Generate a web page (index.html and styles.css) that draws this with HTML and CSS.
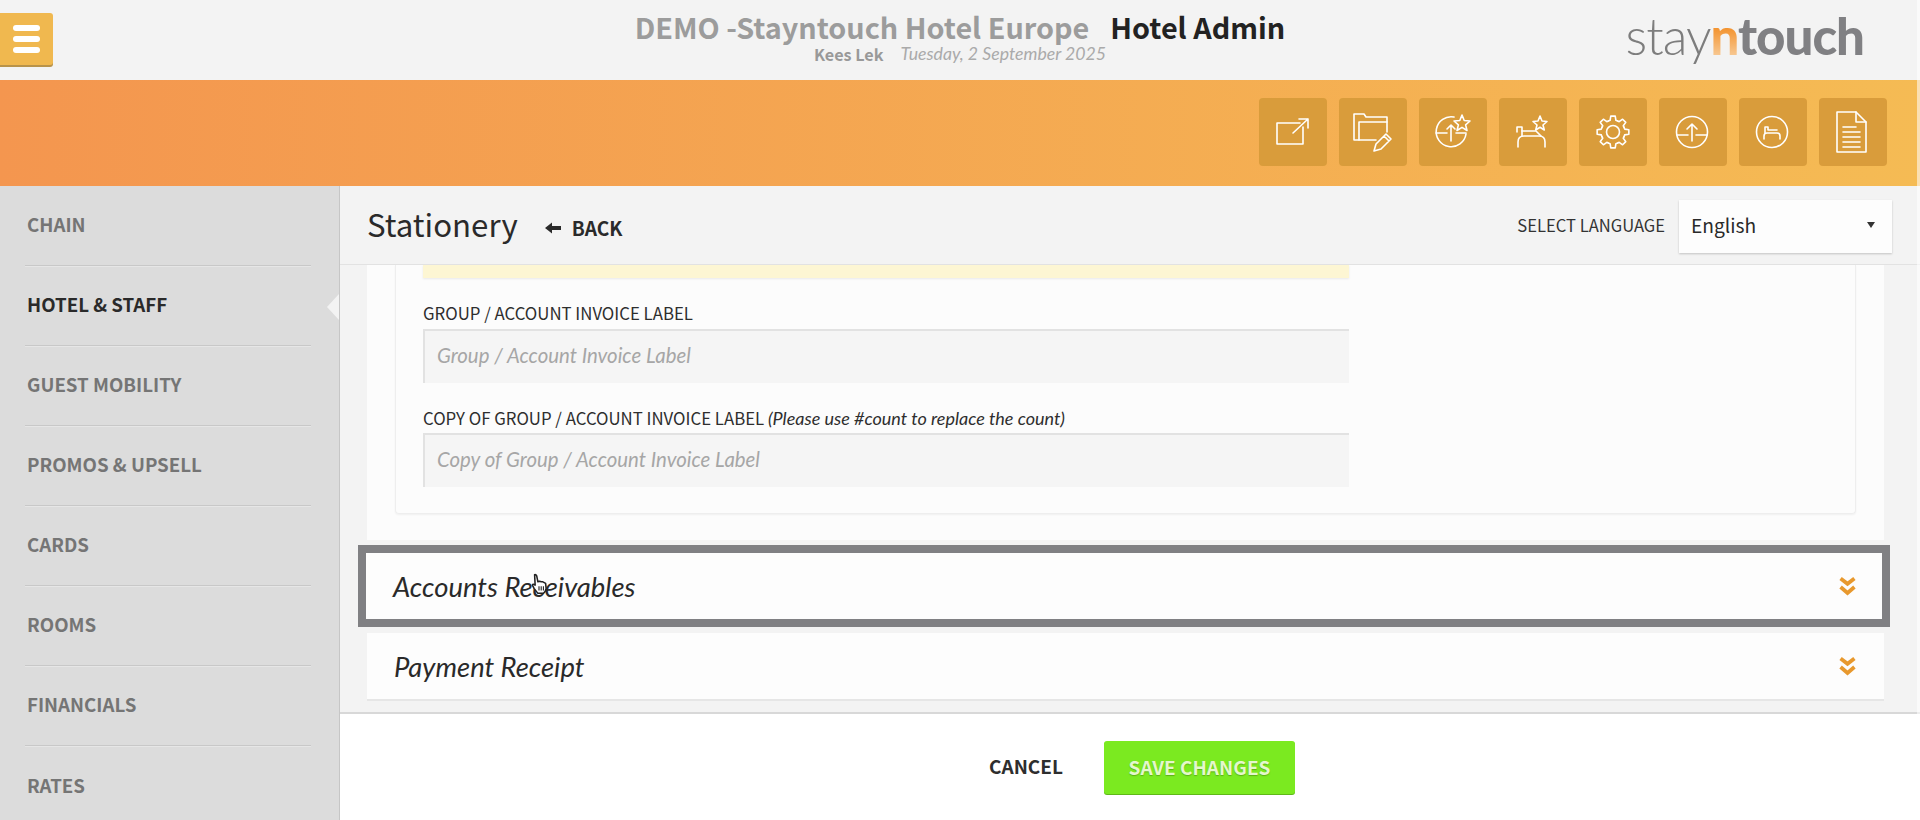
FILE: index.html
```html
<!DOCTYPE html>
<html lang="en">
<head>
<meta charset="utf-8">
<title>Stationery</title>
<link rel="stylesheet" href="styles.css">
</head>
<body>
<div class="app">
  <header class="topbar">
    <div class="topbar-left">
      <button class="menu-btn" aria-label="Menu"><span></span><span></span><span></span></button>
    </div>
    <div class="topbar-title">
      <div class="title-line"><span class="hotel-name">DEMO -Stayntouch Hotel Europe</span><span class="app-name">Hotel Admin</span></div>
      <div class="sub-line"><span class="user">Kees Lek</span><span class="date">Tuesday, 2 September 2025</span></div>
    </div>
    <div class="topbar-right">
      <div class="logo"><span class="logo-stay">stay</span><span class="logo-n">n</span><span class="logo-touch">touch</span></div>
    </div>
  </header>

  <div class="ribbon">
    <a class="tile"><svg viewBox="0 0 68 68"><path d="M41 25H18V46H44V29"/><path d="M34 35L49 21M40 21H49V30"/></svg></a>
    <a class="tile"><svg viewBox="0 0 68 68"><path d="M37 42H15V16H25L27 19H48V34"/><path d="M20 42V24H48"/><path d="M35 53L37 46L47 36L52 41L42 51ZM45 38L50 43"/></svg></a>
    <a class="tile"><svg viewBox="0 0 68 68"><path d="M35 19A15 15 0 1 0 47 36"/><path d="M17 35H28M37 35H47M32 43V27M28 31L32 27L36 31"/><path d="M43 17L45.2 22.5L51 23L46.6 26.8L48 32.5L43 29.4L38 32.5L39.4 26.8L35 23L40.8 22.5Z"/></svg></a>
    <a class="tile"><svg viewBox="0 0 68 68"><path d="M19 49V44Q19 38 25 38H40Q46 38 46 44V49"/><path d="M23 33H37L42 38"/><path d="M18 34V29H23V38"/><path d="M41 18L43 23L48 23.5L44 27L45.3 32L41 29.3L36.700 32L38 27L34 23.5L39 23Z"/></svg></a>
    <a class="tile"><svg viewBox="0 0 68 68"><defs><path id="seg" d="M29.400 22.910L31.100 22.360L31.770 18.160H36.230L36.900 22.360L38.600 22.910"/></defs><use href="#seg"/><use href="#seg" transform="rotate(45 34 34)"/><use href="#seg" transform="rotate(90 34 34)"/><use href="#seg" transform="rotate(135 34 34)"/><use href="#seg" transform="rotate(180 34 34)"/><use href="#seg" transform="rotate(225 34 34)"/><use href="#seg" transform="rotate(270 34 34)"/><use href="#seg" transform="rotate(315 34 34)"/><circle cx="34" cy="34" r="6.500"/></svg></a>
    <a class="tile"><svg viewBox="0 0 68 68"><circle cx="33" cy="34" r="15.500"/><path d="M18 37H29M37 37H48M33 43V26M28 31L33 26L38 31"/></svg></a>
    <a class="tile"><svg viewBox="0 0 68 68"><circle cx="33" cy="34" r="15.500"/><path d="M25 41V38Q25 35 28 35H38Q41 35 41 38V41"/><path d="M26 35V29H29V32H38"/></svg></a>
    <a class="tile"><svg viewBox="0 0 68 68"><path d="M18 14H37L47 24V54H18Z"/><path d="M37 14V24H47M24 29H37M24 34H41M24 39H41M24 44H41M24 49H41"/></svg></a>
  </div>

  <div class="workspace">
    <nav class="sidebar">
      <a class="nav-item">CHAIN</a>
      <a class="nav-item nav-active">HOTEL &amp; STAFF</a>
      <a class="nav-item">GUEST MOBILITY</a>
      <a class="nav-item">PROMOS &amp; UPSELL</a>
      <a class="nav-item">CARDS</a>
      <a class="nav-item">ROOMS</a>
      <a class="nav-item">FINANCIALS</a>
      <a class="nav-item">RATES</a>
    </nav>

    <main class="content">
      <div class="content-head">
        <h1 class="page-title">Stationery</h1>
        <a class="back"><svg class="back-arrow" viewBox="0 0 16 12"><path d="M0 6L7 .5V4H16V8H7V11.500Z"/></svg>BACK</a>
        <div class="lang">
          <span class="lang-label">SELECT LANGUAGE</span>
          <div class="lang-select"><span>English</span><i class="caret"></i></div>
        </div>
      </div>

      <div class="scroller">
        <section class="panel">
          <div class="card">
            <div class="notice"></div>
            <div class="field">
              <label class="field-label">GROUP / ACCOUNT INVOICE LABEL</label>
              <div class="field-input">Group / Account Invoice Label</div>
            </div>
            <div class="field field-second">
              <label class="field-label">COPY OF GROUP / ACCOUNT INVOICE LABEL <em>(Please use #count to replace the count)</em></label>
              <div class="field-input">Copy of Group / Account Invoice Label</div>
            </div>
          </div>
        </section>

        <div class="row row-focus">
          <span class="row-title">Accounts Receivables</span>
          <svg class="chev" viewBox="0 0 16 18"><path d="M1.500 2L8 7L14.500 2M1.500 10L8 15.500L14.500 10"/></svg>
          <svg class="hand" viewBox="0 0 16 20"><path d="M4 1.500Q5.500 1 6 3L7 8L8.500 7.500L10 8L11.500 8L14 9.500L14.500 14Q14 17 12 18.500H7L3.500 14L2 11Q2.500 9.500 4.500 11Z"/><path class="hand-lines" d="M8 12V16M10 12V16M12 12V16"/></svg>
        </div>
        <div class="row row-plain">
          <span class="row-title">Payment Receipt</span>
          <svg class="chev" viewBox="0 0 16 18"><path d="M1.500 2L8 7L14.500 2M1.500 10L8 15.500L14.500 10"/></svg>
        </div>
      </div>

      <footer class="actions">
        <a class="cancel">CANCEL</a>
        <button class="save">SAVE CHANGES</button>
      </footer>
    </main>
  </div>
</div>
</body>
</html>
```
FILE: styles.css
```css
* { box-sizing: border-box; }
html, body { margin: 0; padding: 0; }
body {
  font-family: "Noto Sans CJK SC", "Noto Sans", sans-serif;
  background: #f3f3f3;
  color: #2a2a2a;
}
.app { position: relative; width: 1920px; height: 820px; display: flex; flex-direction: column; overflow: hidden; }
.app::after { content: ""; position: absolute; top: 0; right: 0; bottom: 0; width: 3px; background: rgba(255,255,255,.55); }

/* top bar */
.topbar {
  height: 80px;
  flex: none;
  background: #f3f3f3;
  display: grid;
  grid-template-columns: 1fr auto 1fr;
}
.topbar-left { display: flex; align-items: flex-start; }
.menu-btn {
  width: 53px;
  height: 52px;
  margin-top: 13px;
  padding: 0 13px;
  border: 0;
  border-radius: 0 3px 3px 0;
  background: #f0b84f;
  box-shadow: 0 2px 0 #b8934a;
  display: flex;
  flex-direction: column;
  justify-content: center;
  gap: 5px;
}
.menu-btn span { display: block; height: 6px; border-radius: 3px; background: #fff; }
.topbar-title { text-align: center; padding-top: 7px; }
.title-line { display: flex; gap: 21px; justify-content: center; font-size: 28.800px; font-weight: 700; line-height: 40px; }
.hotel-name { color: #9c9c9c; }
.app-name { color: #222; }
.sub-line { display: flex; gap: 17px; justify-content: center; font-size: 16.200px; line-height: 18px; margin-top: -2px; }
.user { color: #999; font-weight: 700; }
.date { color: #aaa; font-family: Lato, sans-serif; font-size: 17.700px; font-style: italic; }
.topbar-right { display: flex; justify-content: flex-end; align-items: flex-start; padding-right: 56px; }
.logo { font-family: Lato, sans-serif; font-size: 51px; line-height: 60px; margin-top: 6px; color: #7d7d7d; letter-spacing: -1px; }
.logo-stay { font-weight: 300; }
.logo-n {
  font-weight: 900;
  background: linear-gradient(180deg, #f28a1e 30%, #f9dcb8 100%);
  -webkit-background-clip: text;
  background-clip: text;
  color: transparent;
}
.logo-touch { font-weight: 900; color: #808083; }

/* ribbon */
.ribbon {
  height: 106px;
  flex: none;
  display: flex;
  justify-content: flex-end;
  align-items: flex-start;
  gap: 12px;
  padding: 18px 33px 0 0;
  background: linear-gradient(90deg, #f4964f 0%, #f5bb54 100%);
}
.tile { width: 68px; height: 68px; border-radius: 4px; background: #d99c3b; display: block; }
.tile svg { display: block; width: 68px; height: 68px; fill: none; stroke: #fff; stroke-width: 1.600; stroke-linejoin: round; stroke-linecap: round; }

/* workspace */
.workspace { flex: 1; display: grid; grid-template-columns: 340px 1fr; min-height: 0; }
.sidebar { background: #dcdcdc; border-right: 1px solid #c6c6c6; padding: 0 28px 0 25px; overflow: hidden; }
.nav-item {
  position: relative;
  display: flex;
  align-items: center;
  height: 80px;
  padding: 0 0 4px 2px;
  font-size: 18.700px;
  font-weight: 700;
  color: #757575;
  border-bottom: 1px solid #c8c8c8;
  box-shadow: 0 1px 0 #e6e6e6;
}
.nav-item:last-child { border-bottom: 0; box-shadow: none; }
.nav-active { color: #2a2a2a; }
.nav-active::after {
  content: "";
  position: absolute;
  right: -29px;
  top: 27px;
  border-style: solid;
  border-width: 14px 13px 14px 0;
  border-color: transparent #f3f3f3 transparent transparent;
}

/* content */
.content { display: flex; flex-direction: column; min-width: 0; background: #f3f3f3; }
.content-head {
  height: 79px;
  flex: none;
  display: flex;
  align-items: flex-start;
  padding: 0 28px 0 27px;
  border-bottom: 1px solid #e2e2e2;
}
.page-title { margin: 13px 0 0; font-size: 31.200px; line-height: 50px; font-weight: 400; color: #2a2a2a; }
.back { display: flex; align-items: center; margin: 26px 0 0 27px; height: 32px; font-size: 19.200px; font-weight: 700; color: #2a2a2a; }
.back-arrow { width: 16px; height: 12px; margin-right: 11px; fill: #2a2a2a; }
.lang { margin-left: auto; display: flex; align-items: flex-start; }
.lang-label { font-size: 16.600px; line-height: 26px; margin: 26px 14px 0 0; color: #333; }
.lang-select {
  width: 213px;
  height: 53px;
  margin-top: 14px;
  padding: 0 17px 4px 12px;
  display: flex;
  align-items: center;
  justify-content: space-between;
  background: #fdfdfd;
  box-shadow: 0 1px 2px rgba(0,0,0,.2);
  font-size: 19.200px;
}
.caret { width: 0; height: 0; border-style: solid; border-width: 6px 4px 0; border-color: #333 transparent transparent; }

.scroller { flex: 1; min-height: 0; padding: 0 36px 0 27px; overflow: hidden; }
.panel { height: 275px; background: #fcfcfc; padding: 0 28px 27px; }
.card { height: 249px; padding-left: 27px; border: 1px solid #eee; border-top: 0; border-radius: 0 0 4px 4px; box-shadow: 0 1px 2px rgba(0,0,0,.05); }
.notice { width: 926px; height: 13px; background: #fdf6d3; box-shadow: 0 1px 2px rgba(0,0,0,.08); }
.field { width: 926px; padding-top: 21px; }
.field-label { display: block; font-size: 16.800px; line-height: 28px; margin-bottom: 2px; color: #2e2e2e; }
.field-second .field-label { margin-bottom: 1px; }
.field-label em { font-family: Lato, sans-serif; font-size: 18px; }
.field-input {
  height: 54px;
  padding: 0 12px 4px;
  display: flex;
  align-items: center;
  background: #f5f5f5;
  border-top: 2px solid #e2e2e2;
  border-left: 2px solid #e2e2e2;
  font-family: Lato, sans-serif;
  font-size: 20.400px;
  font-style: italic;
  color: #a6a6a6;
}
.row {
  position: relative;
  display: flex;
  align-items: center;
  justify-content: space-between;
  background: #fdfdfd;
}
.row-focus { height: 66px; margin: 13px 2px 0 -1px; padding: 0 26px 0 27px; outline: 8px solid #808083; }
.row-plain { height: 68px; margin-top: 14px; padding: 0 28px 0 27px; border-bottom: 2px solid #e6e6e6; }
.row-title { font-family: Lato, sans-serif; font-size: 27.400px; font-style: italic; color: #2a2a2a; }
.chev { width: 17px; height: 20px; fill: none; stroke: #e8992e; stroke-width: 3.600; }
.hand { position: absolute; left: 164px; top: 20px; width: 18px; height: 22px; fill: #fff; stroke: #222; stroke-width: 1.400; stroke-linejoin: round; }
.hand-lines { stroke-width: 1; }

.actions {
  height: 108px;
  flex: none;
  display: flex;
  align-items: flex-start;
  justify-content: center;
  gap: 41px;
  padding: 27px 0 0 24px;
  background: #fff;
  border-top: 2px solid #d8d8d8;
}
.cancel { margin-top: 11px; font-size: 19px; line-height: 28px; font-weight: 700; color: #2e2e2e; }
.save {
  width: 191px;
  height: 53px;
  padding: 0 0 2px;
  border: 0;
  border-radius: 3px;
  background: #7bea20;
  box-shadow: 0 1px 0 #5fb818;
  font-family: inherit;
  font-size: 19px;
  font-weight: 700;
  color: #e4f7cc;
  text-shadow: 0 1px 1px rgba(60,120,10,.5);
}
```
